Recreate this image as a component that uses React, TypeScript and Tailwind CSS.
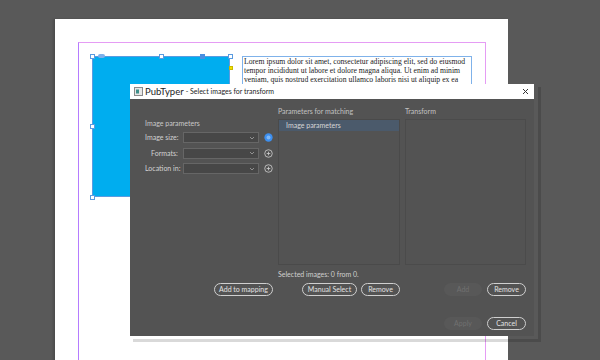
import React from 'react';

const ui = { fontFamily: 'Lato, "Noto Sans", sans-serif' };

const Handle = ({ className }: { className: string }) => (
    <div className={`absolute w-[5px] h-[5px] bg-white border border-[#5a9be0] ${className}`} />
);

const Pill = ({ label, w, disabled }: { label: string; w: string; disabled?: boolean }) => (
    <div
        className={`${w} h-[13px] rounded-full flex items-center justify-center text-[7px] leading-none whitespace-nowrap ${disabled ? 'bg-[#585858] text-[#707070]' : 'border border-[#cfcfcf] text-[#e2e2e2]'
            }`}
    >
        {label}
    </div>
);

const PlusCircle = ({ active }: { active?: boolean }) =>
    active ? (
        <svg width="9" height="9" viewBox="0 0 10 10">
            <circle cx="5" cy="5" r="4.6" fill="#3d8fef" />
            <circle cx="5" cy="5" r="2.2" fill="#7fb8f7" />
        </svg>
    ) : (
        <svg width="9" height="9" viewBox="0 0 10 10" fill="none" stroke="#cfcfcf" strokeWidth="0.9">
            <circle cx="5" cy="5" r="4.2" />
            <path d="M5 3v4M3 5h4" />
        </svg>
    );

const ParamRow = ({ label, active }: { label: string; active?: boolean }) => (
    <div className="flex items-center h-[11px]">
        <div className="w-[33px] text-right text-[7px] text-[#d2d2d2] whitespace-nowrap">{label}</div>
        <div className="ml-[5px] w-[77px] h-[11px] bg-[#474747] border border-[#666] flex items-center justify-end pr-[3px]">
            <svg width="6" height="4" viewBox="0 0 6 4" fill="none" stroke="#9a9a9a" strokeWidth="0.9">
                <path d="M1 1l2 2 2-2" />
            </svg>
        </div>
        <div className="ml-[5px] flex items-center">
            <PlusCircle active={active} />
        </div>
    </div>
);

export default function App() {
    return (
        <div className="relative w-[600px] h-[360px] bg-[#595959] overflow-hidden">
            {/* document page */}
            <div className="absolute left-[55px] top-[19px] w-[453px] h-[400px] bg-white shadow-[-2px_0_2px_rgba(0,0,0,0.15)]">
                <div className="absolute left-[23px] top-[23px] w-[408px] h-[400px] border border-[#e59cf4] border-l-[#b57cff]" />
                <div className="absolute left-[37px] top-[37px] w-[138px] h-[141px] bg-[#00adef] border border-[#5a9be0]" />
                <Handle className="left-[35px] top-[35px]" />
                <Handle className="left-[104px] top-[35px]" />
                <Handle className="left-[173px] top-[35px]" />
                <Handle className="left-[35px] top-[105px]" />
                <Handle className="left-[35px] top-[176px]" />
                <div className="absolute left-[145px] top-[35px] w-[5px] h-[5px] bg-[#4a8fe0]" />
                <div className="absolute left-[43px] top-[35px] w-[7px] h-[4px] bg-[#7fb0ea] rounded-sm" />
                <div className="absolute left-[174px] top-[47px] w-[4px] h-[4px] bg-[#f2e200] border border-[#c8b800]" />
                <div
                    className="absolute left-[187px] top-[37px] w-[230px] h-[40px] border border-[#7fb2ea] pl-[1px] text-[7.7px] leading-[9px] text-[#1b1b1b] whitespace-nowrap"
                    style={{ fontFamily: '"Liberation Serif", serif' }}
                >
                    <div>Lorem ipsum dolor sit amet, consectetur adipiscing elit, sed do eiusmod</div>
                    <div>tempor incididunt ut labore et dolore magna aliqua. Ut enim ad minim</div>
                    <div>veniam, quis nostrud exercitation ullamco laboris nisi ut aliquip ex ea</div>
                </div>
            </div>

            {/* window shadow */}
            <div className="absolute left-[133px] top-[87px] w-[408px] h-[255px] border-r-[3px] border-b-[3px] border-black/15" />

            {/* dialog */}
            <div className="absolute left-[130px] top-[84px] w-[404px] h-[252px] flex flex-col bg-[#535353]" style={ui}>
                <div className="h-[15px] bg-white flex items-center pl-[4px] pr-[4px]">
                    <svg width="9" height="9" viewBox="0 0 9 9">
                        <rect x="0.5" y="0.5" width="8" height="8" fill="#e8e8e8" stroke="#8a8a8a" />
                        <rect x="2" y="2.5" width="3" height="4" fill="#3f8f8a" />
                    </svg>
                    <span className="ml-[2px] text-[9.5px] leading-none text-[#1e1e1e]">PubTyper</span>
                    <span className="ml-[2px] text-[7px] leading-none text-[#1e1e1e]">- Select images for transform</span>
                    <svg className="ml-auto mr-[1px]" width="7" height="7" viewBox="0 0 7 7" stroke="#333" strokeWidth="1">
                        <path d="M1 1l5 5M6 1l-5 5" />
                    </svg>
                </div>

                <div className="flex-1 flex flex-col pl-[15px] pr-[8px] pt-[6px] text-[#cfcfcf]">
                    <div className="grid grid-cols-[128px_122px_121px] gap-x-[5px] h-[160px]">
                        <div className="flex flex-col">
                            <div className="mt-[12px] h-[12px] leading-[12px] text-[7px] text-[#c9c9c9]">Image parameters</div>
                            <div className="mt-[3px] flex flex-col gap-[4.5px]">
                                <ParamRow label="Image size:" active />
                                <ParamRow label="Formats:" />
                                <ParamRow label="Location in:" />
                            </div>
                        </div>
                        <div className="flex flex-col">
                            <div className="h-[12px] leading-[12px] text-[7px] text-[#c2c2c2]">Parameters for matching</div>
                            <div className="mt-[2px] flex-1 border border-[#4a4a4a]">
                                <div className="h-[11px] bg-[#4b5a6b] pl-[7px] flex items-center text-[7px] text-[#d6d6d6]">
                                    Image parameters
                                </div>
                            </div>
                        </div>
                        <div className="flex flex-col">
                            <div className="h-[12px] leading-[12px] text-[7px] text-[#c2c2c2]">Transform</div>
                            <div className="mt-[2px] flex-1 border border-[#4b4b4b]" />
                        </div>
                    </div>

                    <div className="grid grid-cols-[128px_122px_121px] gap-x-[5px] h-[18px]">
                        <div />
                        <div className="flex items-center text-[7px] text-[#cfcfcf]">Selected images: 0 from 0.</div>
                    </div>

                    <div className="grid grid-cols-[128px_122px_121px] gap-x-[5px]">
                        <div className="flex justify-end">
                            <Pill label="Add to mapping" w="w-[59px]" />
                        </div>
                        <div className="flex justify-end gap-[4px]">
                            <Pill label="Manual Select" w="w-[55px]" />
                            <Pill label="Remove" w="w-[39px]" />
                        </div>
                        <div className="flex justify-end gap-[5px]">
                            <Pill label="Add" w="w-[38px]" disabled />
                            <Pill label="Remove" w="w-[39px]" />
                        </div>
                    </div>

                    <div className="mt-[21px] flex justify-end gap-[5px]">
                        <Pill label="Apply" w="w-[38px]" disabled />
                        <Pill label="Cancel" w="w-[39px]" />
                    </div>
                </div>
            </div>
        </div>
    );
}
